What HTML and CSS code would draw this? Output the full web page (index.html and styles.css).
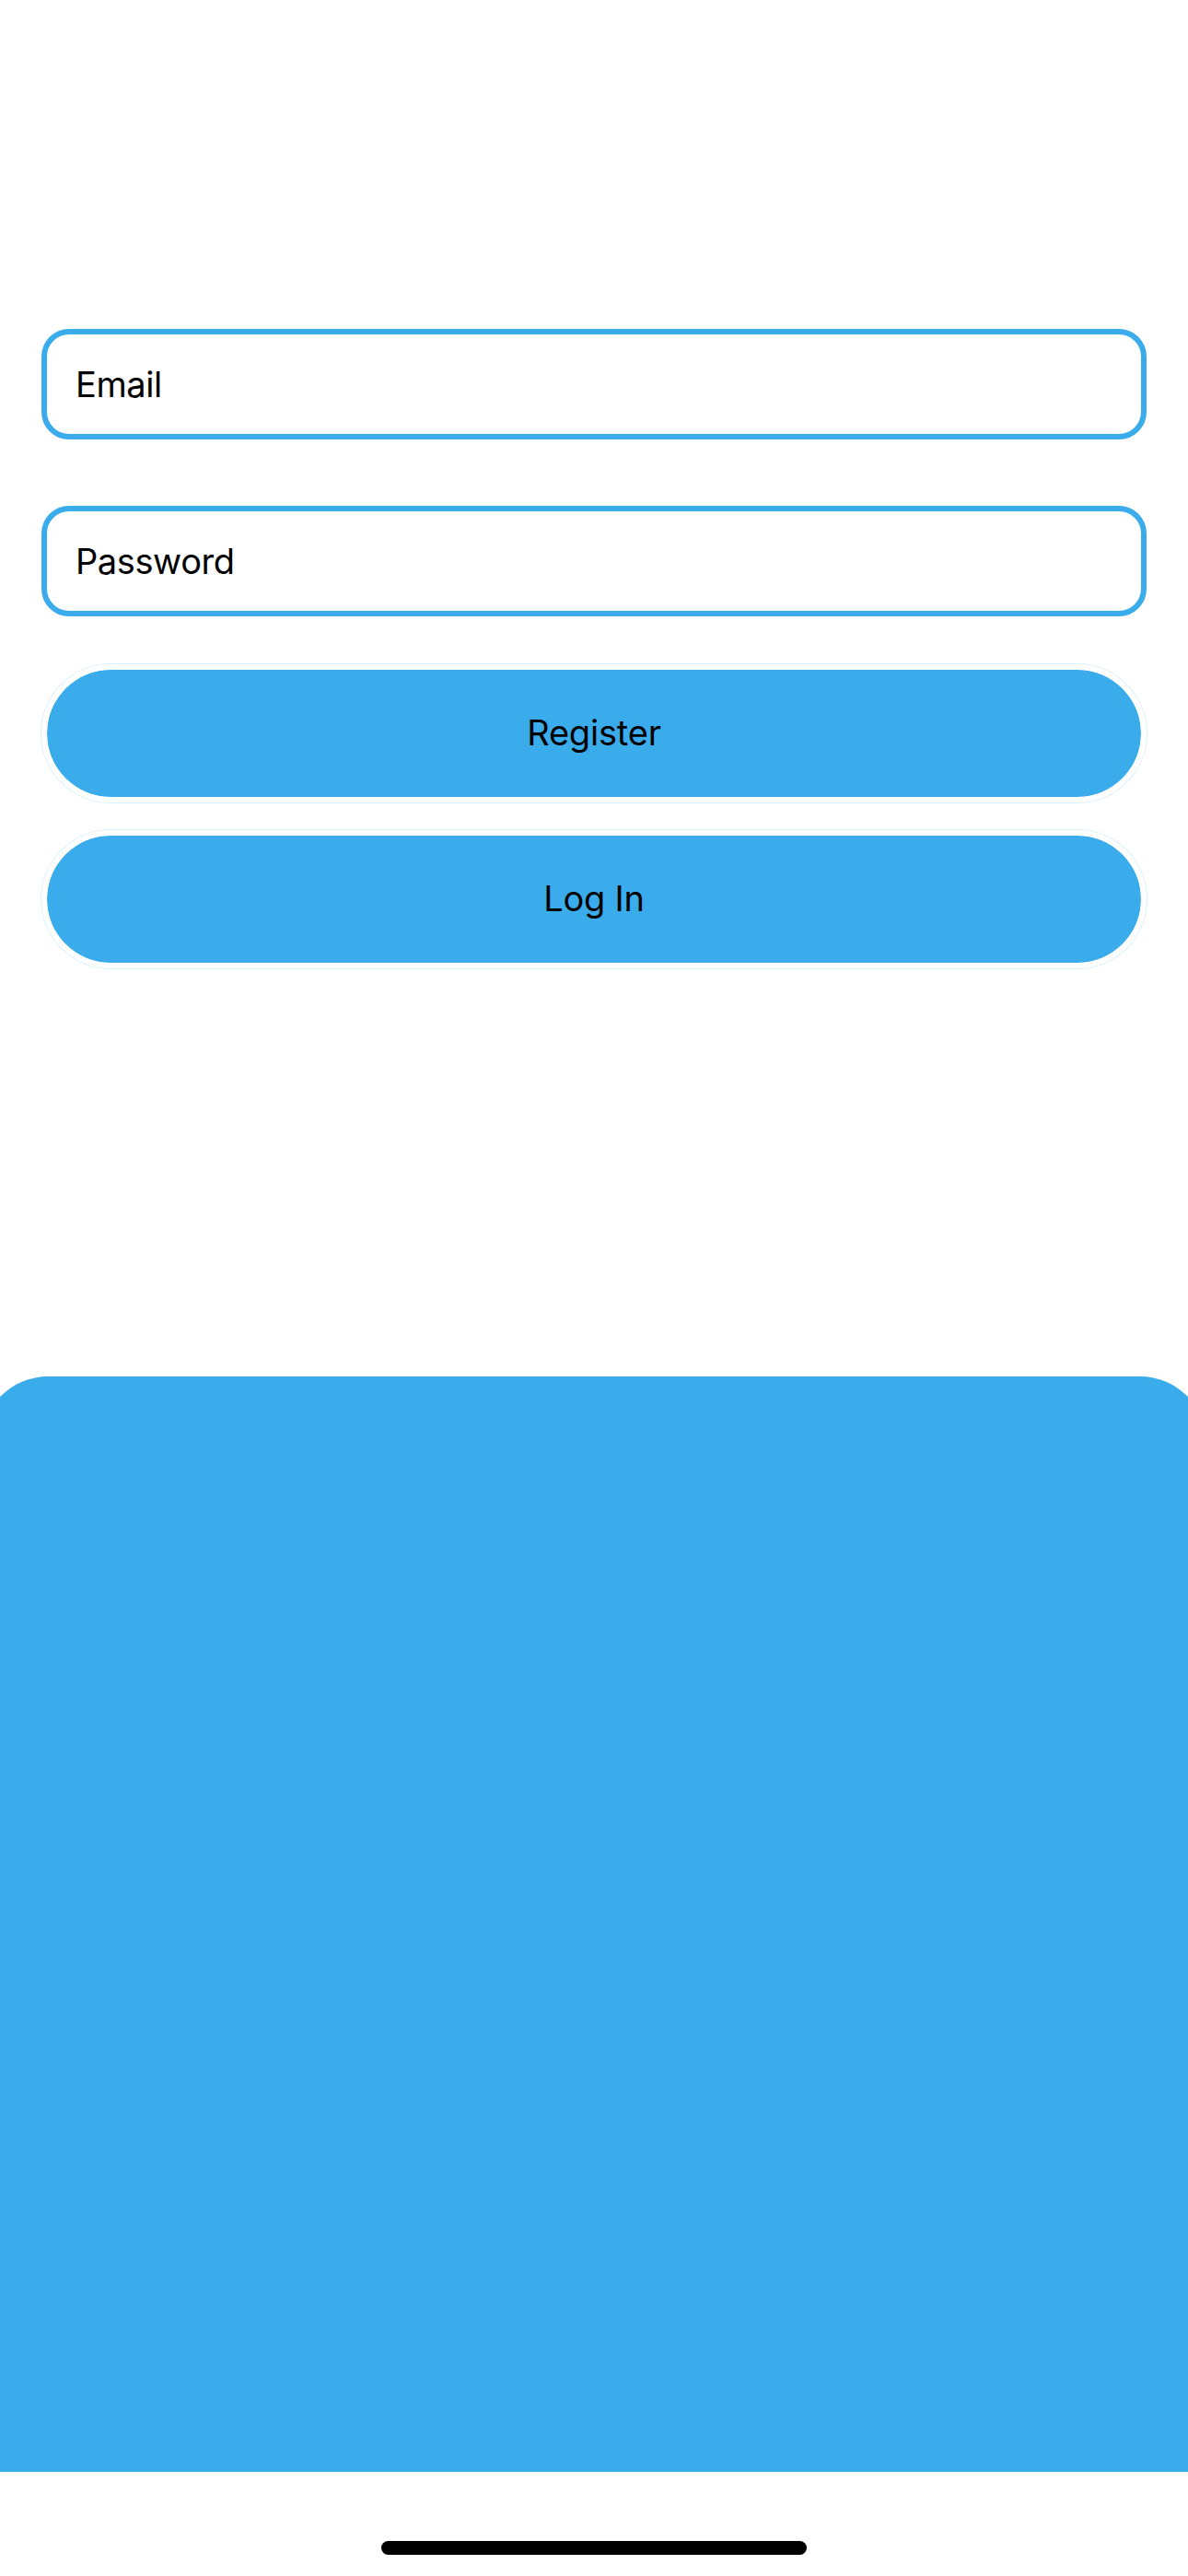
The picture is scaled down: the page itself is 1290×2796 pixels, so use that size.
FILE: index.html
```html
<!DOCTYPE html>
<html lang="en">
<head>
<meta charset="utf-8">
<title>Login</title>
<link rel="stylesheet" href="styles.css">
</head>
<body>
<main class="screen">
  <form class="form">
    <div class="field"><span class="placeholder">Email</span></div>
    <div class="field field-second"><span class="placeholder">Password</span></div>
    <button type="button" class="btn btn-first">Register</button>
    <button type="button" class="btn">Log In</button>
  </form>
  <section class="panel"></section>
  <footer class="home-area"><div class="home-indicator"></div></footer>
</main>
</body>
</html>
```
FILE: styles.css
```css
* { box-sizing: border-box; }
html, body { margin: 0; padding: 0; background: #ffffff; }
body {
  width: 1290px;
  height: 2796px;
  overflow: hidden;
  font-family: Inter, "Noto Sans", Roboto, sans-serif;
  color: #000;
}
.screen {
  display: flex;
  flex-direction: column;
  height: 2796px;
}
.form {
  display: flex;
  flex-direction: column;
  padding: 357px 45px 0;
}
.field {
  height: 120px;
  border: 6px solid #3aacec;
  border-radius: 30px;
  display: flex;
  align-items: center;
  padding-left: 31px;
  background: #fff;
}
.field-second { margin-top: 72px; }
.placeholder {
  font-size: 38px;
  line-height: 1;
  letter-spacing: -0.4px;
}
.btn {
  height: 150px;
  border: 6px solid #fff;
  border-radius: 75px;
  background: #3aacec;
  background-clip: padding-box;
  box-shadow: 0 0 0 1px rgba(58, 172, 236, 0.18);
  font-family: inherit;
  font-size: 38px;
  color: #000;
  margin-top: 30px;
  padding: 0 0 2px;
  letter-spacing: -0.2px;
}
.btn-first { margin-top: 52px; }
.panel {
  margin: 443px -20px 0;
  height: 1189px;
  background: #3aacec;
  border-radius: 72px 72px 0 0;
}
.home-area {
  flex: 1;
  display: flex;
  justify-content: center;
  padding-top: 75px;
}
.home-indicator {
  width: 462px;
  height: 15px;
  border-radius: 8px;
  background: #000;
}
```
